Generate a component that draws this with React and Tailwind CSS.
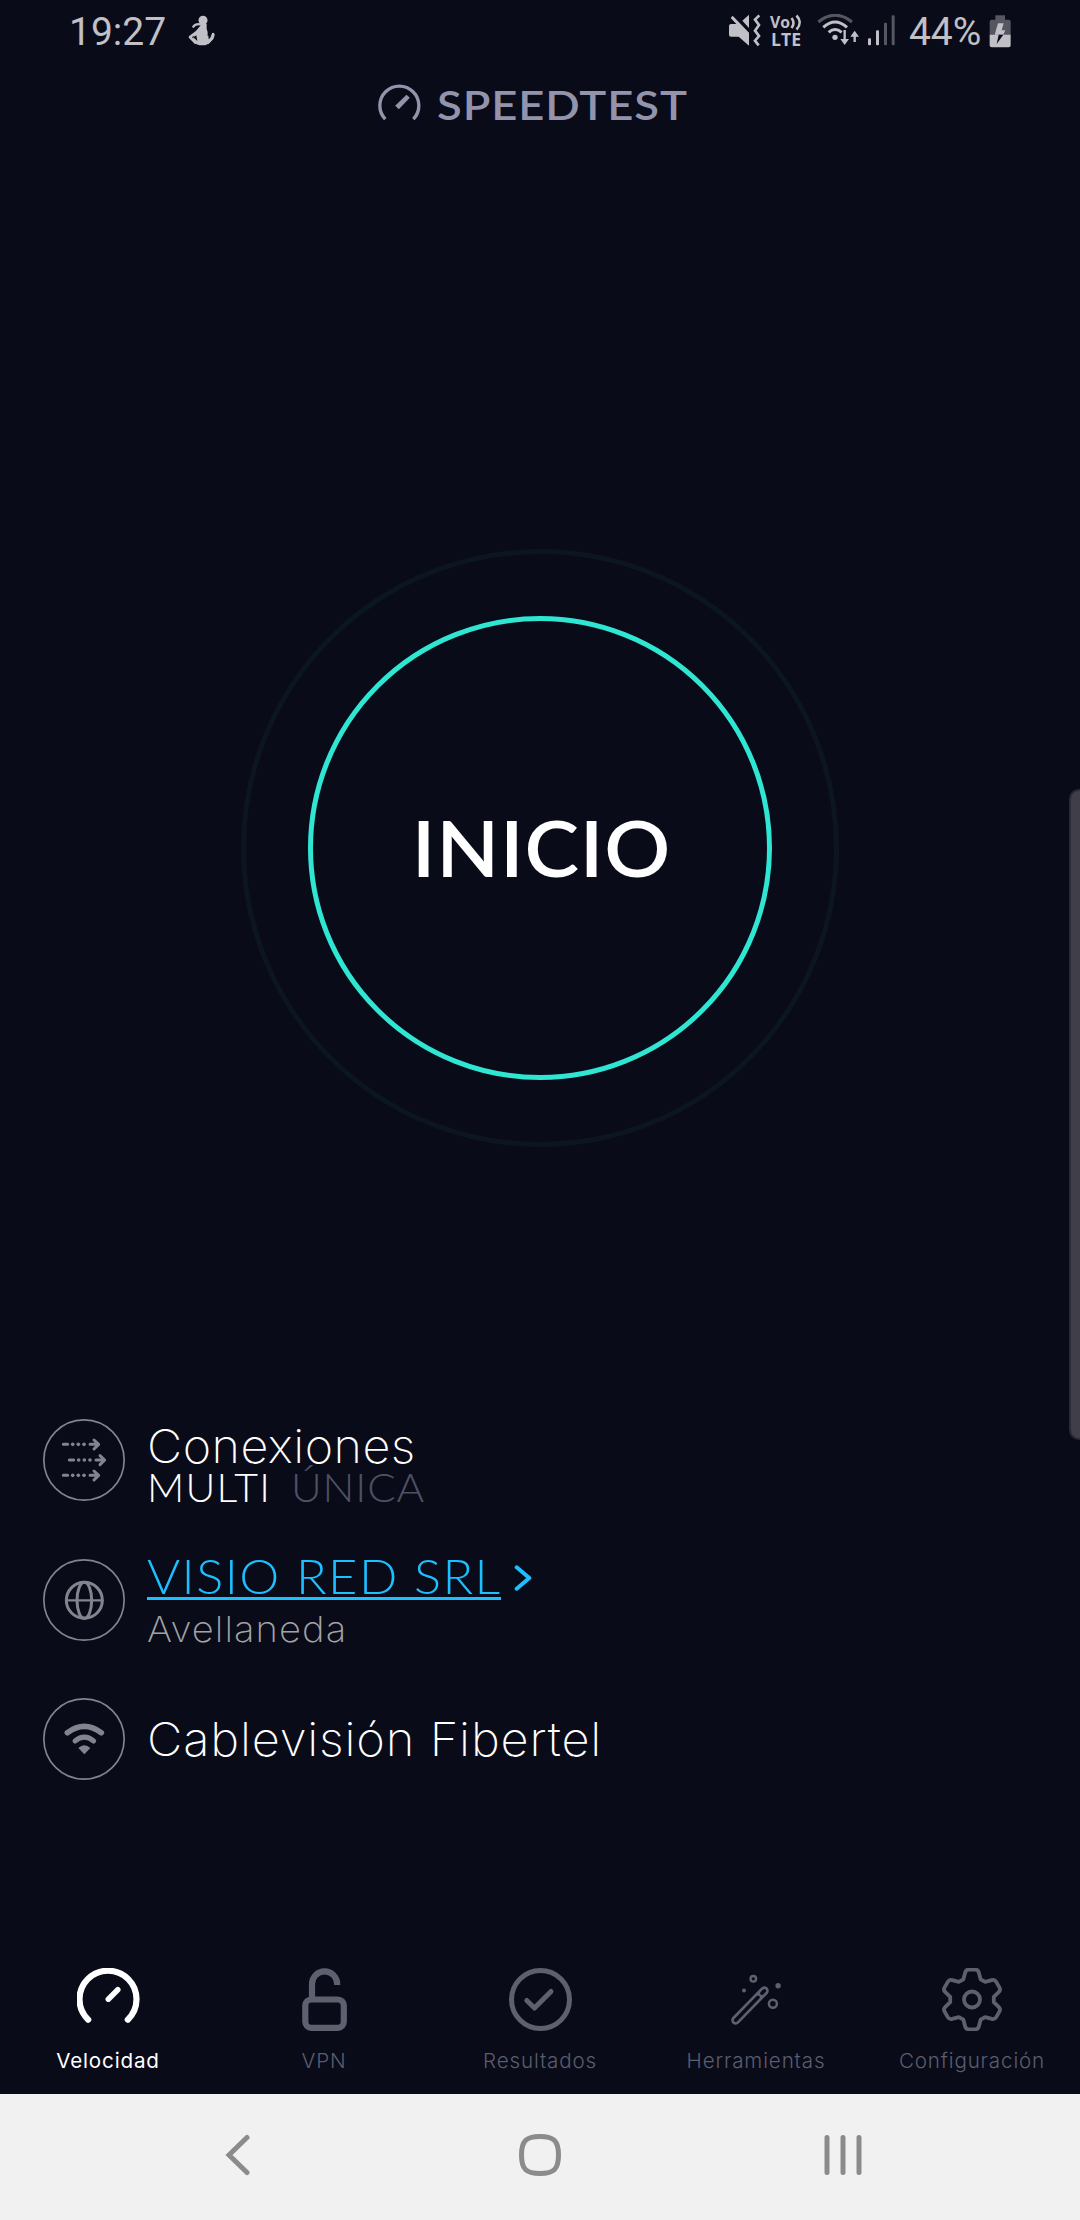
const DIM = "#5f5f70";

const toothPoint = (x, y, deg) => {
  const a = (deg * Math.PI) / 180;
  return `${(x * Math.cos(a) - y * Math.sin(a)).toFixed(2)} ${(x * Math.sin(a) + y * Math.cos(a)).toFixed(2)}`;
};
const gearPath =
  [0, 60, 120, 180, 240, 300]
    .map((d, i) => {
      const p = (x, y) => toothPoint(x, y, d);
      return `${i ? "L" : "M"}${p(-8.6, -20.2)} L${p(-6.9, -26.8)} Q${p(-6.2, -29.8)} ${p(-3.2, -29.8)} L${p(3.2, -29.8)} Q${p(6.2, -29.8)} ${p(6.9, -26.8)} L${p(8.6, -20.2)}`;
    })
    .join(" ") + "Z";

function StatusBar() {
  return (
    <header className="flex h-16 shrink-0 items-center pl-[69px] text-[#c0c0c6]">
      <span className="w-[96px] font-[Roboto] text-[39px] leading-[66px] tracking-[0px]">19:27</span>
      <svg className="mt-[-3px] ml-[23px] h-[31px] w-[28px]" viewBox="415 45 84 93" fill="none" stroke="currentColor" strokeLinecap="round" strokeLinejoin="round">
        <ellipse cx="460" cy="61" rx="13.500" ry="14" fill="currentColor" stroke="none" />
        <path d="M452 73 Q438 70 431 80" strokeWidth="7" />
        <path d="M456 72h15v14q4 8 3 22q10 0 13-7q6-4 8 2q0 14-13 23q-10 11-24 10q-18 0-26-11q-6-12 10-36z" fill="currentColor" stroke="none" />
        <path d="M449 90 L421 111 L437 128" strokeWidth="8" />
        <path d="M440 106l-9 6l12 11z" fill="#090b19" stroke="none" />
        <path d="M476 96q0 16 1 22q10-6 9-22z" fill="#090b19" stroke="none" />
        <path d="M490 102q-1 14-14 26" strokeWidth="7" />
      </svg>
      <div className="ml-auto flex items-center pr-[69px]">
        <svg className="mt-[-3px] h-[33px] w-[33px]" viewBox="54 42 99 99" fill="currentColor">
          <path d="M57 78q0-6 6-6H79L62 54L68 47L117 98V137L86 110H63q-6 0-6-6z" />
          <path d="M97 62L117 44V84z" />
          <path d="M148 46L135 59L147 75L135 92L147 108L135 122L146 136" fill="none" stroke="currentColor" strokeWidth="8" />
        </svg>
        <svg className="mt-[-3px] ml-[9px] h-[33px] w-[34px] overflow-visible" viewBox="0 0 34 33">
          <text x="0" y="13.500" fontFamily="Open Sans" fontWeight="700" fontSize="16" textLength="20" lengthAdjust="spacingAndGlyphs" fill="currentColor">Vo</text>
          <text x="1" y="32" fontFamily="Open Sans" fontWeight="700" fontSize="17" textLength="30" lengthAdjust="spacingAndGlyphs" fill="currentColor">LTE</text>
          <path d="M21.500 4q4 5 0 10M26.500 1.500q6.500 7 0 14" fill="none" stroke="currentColor" strokeWidth="2.600" />
        </svg>
        <svg className="mt-[-3px] ml-[13px] h-[33px] w-[43px]" viewBox="322 42 129 99" fill="none" stroke="currentColor" strokeWidth="9">
          <path d="M326 66Q376 25 427 66" stroke="#55565f" />
          <path d="M341 82Q376 50 412 82M357 97Q376 80 396 97" />
          <circle cx="376" cy="112" r="8" fill="currentColor" stroke="none" />
          <path d="M405 90V128M435 126V98" strokeWidth="7" />
          <path d="M392 117h26l-13 18zM422 110h26l-13-18z" fill="currentColor" stroke="none" />
        </svg>
        <svg className="mt-[-3px] ml-[7px] h-[33px] w-[29px]" viewBox="471 42 87 99" fill="currentColor">
          <rect x="474" y="115" width="9" height="21" rx="3" />
          <rect x="498" y="91" width="9" height="45" rx="3" />
          <rect x="522" y="68" width="9" height="68" rx="3" fill="#55565f" />
          <rect x="545" y="46" width="9" height="90" rx="3" fill="#55565f" />
        </svg>
        <span className="ml-[13px] w-[79px] whitespace-nowrap font-[Roboto] text-[39px] leading-[66px] tracking-[-0.1px]">44%</span>
        <svg className="mt-[-2px] ml-[1px] h-[33px] w-[22px]" viewBox="838 43 66 99">
          <path d="M857 44h29v13h11q6 0 6 6v40h-63v-40q0-6 6-6h11z" fill="#55565f" />
          <path d="M840 102h63v32q0 6-6 6h-51q-6 0-6-6z" fill="currentColor" />
          <path d="M865 68h17l-6 21h11l-6 13h-26z" fill="currentColor" />
          <path d="M867 102h14l-20 28z" fill="#090b19" />
        </svg>
      </div>
    </header>
  );
}

function Brand() {
  return (
    <div className="flex h-20 shrink-0 items-center pl-[378px] text-[#9393ab]">
      <svg className="mt-[-4px] h-[36px] w-[43px]" viewBox="54 42 128 108">
        <path d="M75.500 147.500A58.500 58.500 0 1 1 159.500 147.500" fill="none" stroke="currentColor" strokeWidth="10" />
        <path d="M105 107L139 74L149 83L116 118z" fill="currentColor" />
      </svg>
      <span className="mt-[2px] ml-[16px] origin-left scale-x-[1.12] font-[Lato] text-[40.5px] leading-[80px] font-semibold tracking-[0.8px]">SPEEDTEST</span>
    </div>
  );
}

function StartButton() {
  return (
    <button className="mx-auto mt-[405px] flex size-[598px] shrink-0 items-center justify-center rounded-full border-[5px] border-[#0b1622]">
      <span className="flex size-[464px] items-center justify-center rounded-full border-[5px] border-[#2ee6d2]">
        <span className="scale-x-[1.06] pl-[2px] font-[Lato] text-[77.5px] leading-[96px] font-semibold tracking-[0.700px] text-white">INICIO</span>
      </span>
    </button>
  );
}

function RowIcon({ children }) {
  return (
    <svg className="size-[82px] shrink-0" viewBox="0 0 246 246" fill="none" stroke="#84848e" strokeLinecap="round" strokeLinejoin="round">
      <circle cx="123" cy="123" r="120.500" strokeWidth="5" />
      {children}
    </svg>
  );
}

function Arrow({ x, y }) {
  return (
    <g transform={`translate(${x} ${y})`} strokeWidth="9">
      <path d="M0 0H13M80 0H104M92 -13L106 0L92 14" />
      <g fill="#84848e" stroke="none">
        <circle cx="28" r="5.500" /><circle cx="45" r="5.500" /><circle cx="62" r="5.500" />
      </g>
    </g>
  );
}

function Connection() {
  return (
    <section className="mt-[272px] flex flex-col pl-[43px] text-white">
      <div className="flex h-[82px]">
        <RowIcon>
          <Arrow x={61} y={76} /><Arrow x={79} y={123} /><Arrow x={61} y={169} />
        </RowIcon>
        <div className="ml-[22px] flex flex-col items-start">
          <span className="origin-left scale-x-[1.035] font-[Inter] text-[46.8px] leading-[54px] font-extralight tracking-[0.5px]">Conexiones</span>
          <div className="flex font-[Lato] text-[39.1px] leading-[28px] font-light">
            <span className="w-[144px] origin-left scale-x-[1.05] tracking-[1.1px]">MULTI</span>
            <span className="origin-left scale-x-[1.08] tracking-[0.8px] text-[#4f5063]">ÚNICA</span>
          </div>
        </div>
      </div>
      <div className="mt-[58px] flex h-[82px]">
        <RowIcon>
          <circle cx="124" cy="124" r="54" strokeWidth="9" />
          <ellipse cx="124" cy="124" rx="22" ry="54" strokeWidth="9" />
          <path d="M70 124H178" strokeWidth="7" />
        </RowIcon>
        <div className="ml-[22px]">
          <div className="flex">
            <div className="h-[41px] w-[354px] border-b-[3px] border-[#1cbfff] whitespace-nowrap">
              <span className="inline-block origin-left scale-x-[1.08] align-top font-[Lato] text-[46.8px] leading-[34px] font-light tracking-[1.35px] text-[#1cbfff]">VISIO RED SRL</span>
            </div>
            <svg className="mt-[6px] ml-[13px] h-[26px] w-[18px]" viewBox="1451 74 54 78" fill="none" stroke="#1cbfff" strokeWidth="12" strokeLinecap="round" strokeLinejoin="round">
              <path d="M1459 81L1497 113L1459 145" />
            </svg>
          </div>
          <span className="block origin-left scale-x-[1.065] font-[Inter] text-[35.8px] leading-[58px] font-extralight tracking-[1px] text-[#a3a3a5]">Avellaneda</span>
        </div>
      </div>
      <div className="mt-[57px] flex h-[82px]">
        <RowIcon>
          <path d="M73 104Q124 66 175 104" strokeWidth="17" />
          <path d="M96 129Q124 106 152 129" strokeWidth="15" />
          <path d="M106 150Q124 134 142 150L124 169z" fill="#84848e" stroke="none" />
        </RowIcon>
        <span className="ml-[22px] origin-left scale-x-[1.042] font-[Inter] text-[46.8px] leading-[83px] font-extralight tracking-[0.8px]">Cablevisión Fibertel</span>
      </div>
    </section>
  );
}

const tabs = [
  { label: "Velocidad", active: true, icon: <g transform="translate(31 31.500)" strokeLinecap="round"><path d="M-19.800 20.200A28.500 28.500 0 1 1 19.800 20.200" strokeWidth="6.200" /><path d="M0.300 -0.300L9.800 -9.800" strokeWidth="5.500" /></g> },
  { label: "VPN", icon: <g strokeWidth="6.200"><path d="M19 29V16a12.600 12.600 0 0 1 25.200 0V17" /><rect x="12.300" y="31.500" width="38.500" height="28.300" rx="6" /></g> },
  { label: "Resultados", icon: <g strokeWidth="5" strokeLinecap="round" strokeLinejoin="round"><circle cx="31.500" cy="31.500" r="29" /><path d="M17.800 32.500L25.500 40L42 23.500" /></g> },
  {
    label: "Herramientas",
    icon: (
      <g strokeLinecap="round">
        <path d="M10.700 52.200L39.300 22.800" strokeWidth="9" />
        <path d="M10.700 52.200L33 29.300M37 25.200L39.300 22.800" stroke="#090b19" strokeWidth="3.600" />
        <circle cx="28.300" cy="10.800" r="2.800" strokeWidth="2.400" />
        <circle cx="47.900" cy="35.800" r="4" strokeWidth="2.500" />
        <circle cx="19" cy="22.500" r="2" fill={DIM} stroke="none" />
        <circle cx="53.100" cy="17.800" r="2.700" fill={DIM} stroke="none" />
      </g>
    ),
  },
  { label: "Configuración", icon: <g transform="translate(31 31.500)" strokeWidth="3.800" strokeLinejoin="round"><path d={gearPath} /><circle r="8" /></g> },
];

function TabBar() {
  return (
    <nav className="mt-auto mb-[4px] grid shrink-0 grid-cols-5">
      {tabs.map((t) => (
        <div key={t.label} className="flex flex-col items-center">
          <svg className="size-[63px]" viewBox="0 0 63 63" fill="none" stroke={t.active ? "#ffffff" : DIM}>{t.icon}</svg>
          <span className={`font-[Inter] text-[20.6px] leading-[59px] tracking-[0.85px] ${t.active ? "text-white" : "font-light text-[#5c5d6f]"}`}>{t.label}</span>
        </div>
      ))}
    </nav>
  );
}

function SystemNav() {
  return (
    <div className="flex h-[126px] shrink-0 items-center bg-[#f1f1f1] pb-[4px] pl-[225px]">
      <svg className="h-[42px] w-[26px]" viewBox="0 0 26 42" fill="none" stroke="#8b8b8b" strokeWidth="5" strokeLinecap="round" strokeLinejoin="miter">
        <path d="M22 3.500L4 21L22 38.500" />
      </svg>
      <svg className="ml-[268px] size-[42px]" viewBox="0 0 42 42" fill="none" stroke="#8b8b8b" strokeWidth="5">
        <path d="M21 2.500C35 2.500 39.500 7 39.500 21S35 39.500 21 39.500S2.500 35 2.500 21S7 2.500 21 2.500z" />
      </svg>
      <svg className="ml-[262px] h-[42px] w-[40px]" viewBox="0 0 40 42" stroke="#8b8b8b" strokeWidth="5" strokeLinecap="round">
        <path d="M4 3.500V38.500M20 3.500V38.500M36 3.500V38.500" />
      </svg>
    </div>
  );
}

export default function App() {
  return (
    <div className="relative flex h-[2220px] w-[1080px] flex-col overflow-hidden bg-[#090b19]">
      <StatusBar />
      <Brand />
      <StartButton />
      <Connection />
      <TabBar />
      <SystemNav />
      <div className="absolute top-[789px] right-0 h-[651px] w-[11px] rounded-l-[10px] border-2 border-r-0 border-[#2a2a34] bg-[#3f3e49]" />
    </div>
  );
}
